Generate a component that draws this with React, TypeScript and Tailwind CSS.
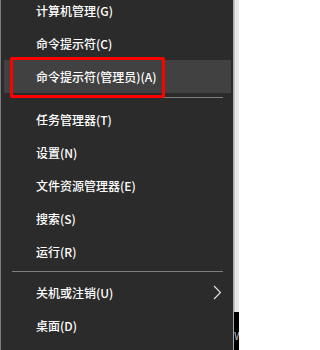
import React from "react";

const font = { fontFamily: '"Noto Sans CJK SC", "Noto Sans", sans-serif' };

function Item({ label, highlight, chevron }: { label: string; highlight?: boolean; chevron?: boolean }) {
  return (
    <div
      className={`relative flex h-[33px] shrink-0 items-center pl-[32px] text-[12px] font-medium leading-[16px] text-white ${
        highlight ? "bg-[#414141]" : ""
      }`}
    >
      <span>{label}</span>
      {chevron && (
        <svg className="absolute right-[9px] top-[9px]" width="9" height="15" viewBox="0 0 9 15">
          <polyline points="1,1 7.5,7.5 1,14" fill="none" stroke="#e8e8e8" strokeWidth="1.1" />
        </svg>
      )}
    </div>
  );
}

function Sep({ top, bottom }: { top: string; bottom: string }) {
  return (
    <div className={`flex shrink-0 flex-col ${top} ${bottom} pl-[8px] pr-[8px]`}>
      <div className="h-px bg-[#7f7f7f]" />
    </div>
  );
}

export default function App() {
  return (
    <div className="relative flex h-[350px] w-[239px] overflow-hidden bg-black" style={font}>
      <div className="w-px shrink-0 bg-[#7c7c7c]" />
      <div className="flex w-[232px] shrink-0 flex-col bg-[#2b2b2b] pl-[3px] pr-[2px]">
        <div className="-mt-[6px] flex flex-col">
          <Item label="计算机管理(G)" />
          <Item label="命令提示符(C)" />
          <Item label="命令提示符(管理员)(A)" highlight />
          <Sep top="pt-[4px]" bottom="pb-[5px]" />
          <Item label="任务管理器(T)" />
          <Item label="设置(N)" />
          <Item label="文件资源管理器(E)" />
          <Item label="搜索(S)" />
          <Item label="运行(R)" />
          <Sep top="pt-[3px]" bottom="pb-[4px]" />
          <Item label="关机或注销(U)" chevron />
          <Item label="桌面(D)" />
        </div>
      </div>
      <div className="w-px shrink-0 bg-[#a8a8a8]" />
      <div className="flex w-[5px] shrink-0 flex-col">
        <div className="flex h-[312px] shrink-0">
          <div className="w-px bg-[#c4c4c4]" />
          <div className="flex-1 bg-[#e8e8e8]" />
        </div>
        <div className="flex-1 overflow-hidden bg-black pt-[16px] text-[11px] leading-[14px] text-[#bdbdbd]">W</div>
      </div>
      <div className="pointer-events-none absolute left-[10px] top-[57px] h-[41px] w-[155px] rounded-[2px] border-[3px] border-[#ff0000]" />
    </div>
  );
}
